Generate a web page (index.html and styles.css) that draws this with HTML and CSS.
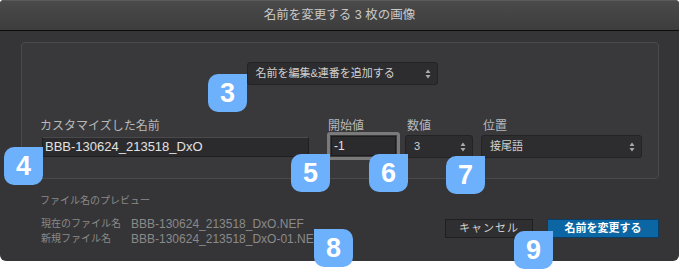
FILE: index.html
```html
<!doctype html>
<html lang="ja">
    <head>
        <meta charset="UTF-8" />
        <meta name="viewport" content="width=device-width, initial-scale=1.0" />
        <title>名前を変更する</title>
        <link rel="stylesheet" href="styles.css">
    </head>
    <body>
        <div class="dialog">
            <div class="titlebar">名前を変更する 3 枚の画像</div>

            <div class="panel">
                <div class="mode-row">
                    <div class="select mode-select">
                        名前を編集&amp;連番を追加する
                        <svg class="arrows" width="6" height="10" viewBox="0 0 6 10"><path d="M3 0.5L5.5 4H0.5z M3 9.5L0.5 6h5z" fill="#aaa"/></svg>
                    </div>
                </div>

                <div class="fields">
                    <div class="field name-field">
                        <label>カスタマイズした名前</label>
                        <div class="input">BBB-130624_213518_DxO</div>
                    </div>
                    <div class="field start-field">
                        <label>開始値</label>
                        <div class="ring"><div class="input">-1</div></div>
                    </div>
                    <div class="field digits-field">
                        <label>数値</label>
                        <div class="select">
                            3
                            <svg class="arrows" width="6" height="10" viewBox="0 0 6 10"><path d="M3 0.5L5.5 4H0.5z M3 9.5L0.5 6h5z" fill="#aaa"/></svg>
                        </div>
                    </div>
                    <div class="field pos-field">
                        <label>位置</label>
                        <div class="select">
                            接尾語
                            <svg class="arrows" width="6" height="10" viewBox="0 0 6 10"><path d="M3 0.5L5.5 4H0.5z M3 9.5L0.5 6h5z" fill="#aaa"/></svg>
                        </div>
                    </div>
                </div>
            </div>

            <div class="footer">
                <div class="preview">
                    <div class="preview-title">ファイル名のプレビュー</div>
                    <div class="preview-grid">
                        <span class="key">現在のファイル名</span><span>BBB-130624_213518_DxO.NEF</span>
                        <span class="key">新規ファイル名</span><span>BBB-130624_213518_DxO-01.NEF</span>
                    </div>
                </div>
                <div class="buttons">
                    <div class="btn">キャンセル</div>
                    <div class="btn primary">名前を変更する</div>
                </div>
            </div>
        </div>

        <!-- callout numbers -->
        <div class="badge b3">3</div>
        <div class="badge b4">4</div>
        <div class="badge b5">5</div>
        <div class="badge b6">6</div>
        <div class="badge b7">7</div>
        <div class="badge b8">8</div>
        <div class="badge b9">9</div>
    </body>
</html>
```

FILE: styles.css
```css
html,
body {
    margin: 0;
    background: #fff;
    font-family: "Liberation Sans", "Noto Sans CJK JP", sans-serif;
}
body {
    position: relative;
    width: 680px;
    height: 272px;
    overflow: hidden;
}
.dialog {
    width: 679px;
    height: 261px;
    background: #353537;
    border-radius: 4px 4px 6px 6px;
    box-sizing: border-box;
}
.titlebar {
    height: 31px;
    border-bottom: 1px solid #0c0c0c;
    border-top: 1px solid #5a5a5a;
    border-radius: 4px 4px 0 0;
    box-sizing: border-box;
    background: linear-gradient(#4a4a4a, #3d3d3d);
    color: #c9c9c9;
    font-size: 12.5px;
    line-height: 29px;
    text-align: center;
}
.panel {
    margin: 11px 20px 0 21px;
    height: 137px;
    box-sizing: border-box;
    border: 1px solid #4a4a4c;
    border-radius: 4px;
    background: #39393b;
    padding: 19px 16px 0 20px;
}
.mode-row {
    display: flex;
    justify-content: center;
}
.select {
    position: relative;
    box-sizing: border-box;
    height: 23px;
    background: #2d2d2f;
    border: 1px solid #232325;
    border-radius: 3px;
    color: #d0d0d0;
    font-size: 11px;
    line-height: 21px;
    padding-left: 8px;
}
.arrows {
    position: absolute;
    right: 6px;
    top: 6px;
}
.mode-select {
    width: 191px;
}
.fields {
    display: flex;
    margin-top: 31px;
}
.field label {
    display: block;
    color: #b8b8b8;
    font-size: 12px;
    height: 20px;
}
.input {
    box-sizing: border-box;
    height: 20px;
    background: #2b2b2d;
    border: 1px solid #1f1f21;
    border-top-color: #4a4a4c;
    color: #e2e2e2;
    font-size: 13px;
    line-height: 18px;
    padding-left: 2px;
}
.name-field {
    width: 267px;
}
.name-field label {
    margin: 0 0 1px -2px;
}
.start-field {
    margin-left: 18px;
    width: 73px;
}
.start-field label {
    margin-left: 1px;
    height: 16px;
}
.ring {
    border: 3px solid #7a7a7a;
    border-radius: 3px;
    padding: 1px;
}
.start-field .input {
    border: 1px solid #1c1c1e;
    font-size: 12px;
}
.digits-field {
    margin-left: 5px;
    width: 68px;
}
.digits-field label,
.pos-field label {
    margin-left: 2px;
    height: 19px;
}
.pos-field {
    margin-left: 8px;
    width: 161px;
}
.footer {
    display: flex;
    justify-content: space-between;
    padding: 13px 20px 0 40px;
}
.preview {
    color: #8a8a8a;
    font-size: 10px;
}
.preview-title {
    height: 16px;
    margin-bottom: 9px;
}
.preview-grid {
    display: grid;
    grid-template-columns: 91px auto;
    row-gap: 1px;
    line-height: 14px;
    font-size: 12px;
}
.preview-grid .key {
    font-size: 10px;
    padding-left: 1px;
}
.buttons {
    display: flex;
    gap: 14px;
    margin-top: 27px;
    height: 19px;
}
.btn {
    box-sizing: border-box;
    height: 19px;
    width: 88px;
    background: #2f2f31;
    border: 1px solid #1f1f21;
    color: #cfcfcf;
    font-size: 11px;
    line-height: 17px;
    text-align: center;
    letter-spacing: 1px;
}
.btn.primary {
    width: 112px;
    background: #0b66a3;
    border-color: #0b3e66;
    color: #fff;
    font-weight: bold;
    letter-spacing: 0;
}
.badge {
    position: absolute;
    width: 39px;
    height: 38px;
    background: #6db0fc;
    color: #fff;
    font-weight: bold;
    font-size: 27px;
    line-height: 38px;
    text-align: center;
    border-radius: 10px 0 10px 10px;
}
.b3 { left: 208px; top: 74px; }
.b4 { left: 4px; top: 147px; }
.b5 { left: 291px; top: 154px; }
.b6 { left: 369px; top: 154px; }
.b7 { left: 446px; top: 156px; }
.b8 { left: 314px; top: 229px; border-radius: 0 10px 10px 10px; }
.b9 { left: 514px; top: 231px; }
```
